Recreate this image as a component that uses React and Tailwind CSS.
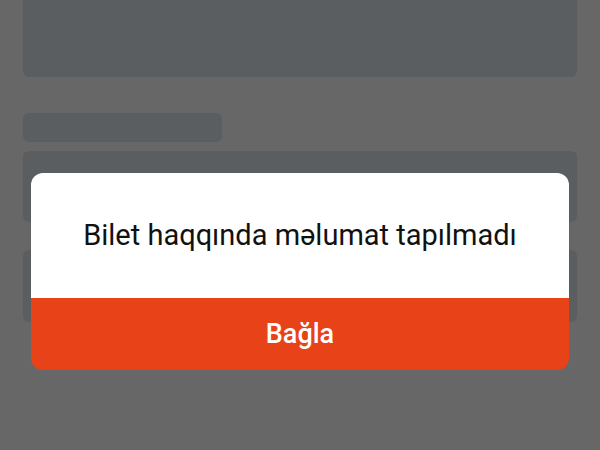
export default function App() {
  return (
    <div className="relative w-[600px] h-[450px] overflow-hidden bg-[#676767]" style={{ fontFamily: "Roboto, 'Noto Sans', sans-serif" }}>
      <div className="flex flex-col px-[23px]">
        <div className="h-[77px] rounded-b-[6px] bg-[#5a5e61]" />
        <div className="mt-[36px] w-[199px] h-[29px] rounded-[6px] bg-[#5a5e61]" />
        <div className="mt-[9px] h-[71px] rounded-[6px] bg-[#5a5e61]" />
        <div className="mt-[28px] h-[72px] rounded-[6px] bg-[#5a5e61]" />
      </div>
      <div className="absolute left-[31px] top-[173px] w-[538px] h-[197px] rounded-[12px] overflow-hidden flex flex-col">
        <div className="h-[125px] bg-white flex items-center justify-center">
          <span className="text-[29px] leading-none text-[#111111]">Bilet haqqında məlumat tapılmadı</span>
        </div>
        <div className="flex-1 bg-[#e84318] flex items-center justify-center">
          <span className="text-[27px] leading-none font-medium text-white">Bağla</span>
        </div>
      </div>
    </div>
  );
}
